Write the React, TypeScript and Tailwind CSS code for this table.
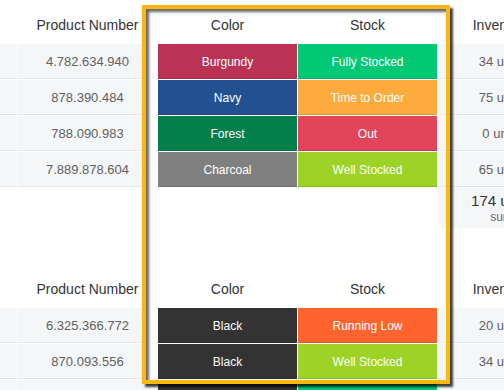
import React from "react";

type Row = {
  product: string;
  color: { label: string; bg: string };
  stock: { label: string; bg: string };
  units: string;
};

const firstGroup: Row[] = [
  { product: "4.782.634.940", color: { label: "Burgundy", bg: "bg-[#bb3354]" }, stock: { label: "Fully Stocked", bg: "bg-[#00c875]" }, units: "34 units" },
  { product: "878.390.484", color: { label: "Navy", bg: "bg-[#225091]" }, stock: { label: "Time to Order", bg: "bg-[#fdab3d]" }, units: "75 units" },
  { product: "788.090.983", color: { label: "Forest", bg: "bg-[#037f4c]" }, stock: { label: "Out", bg: "bg-[#e2445c]" }, units: "0 units" },
  { product: "7.889.878.604", color: { label: "Charcoal", bg: "bg-[#808080]" }, stock: { label: "Well Stocked", bg: "bg-[#9cd326]" }, units: "65 units" },
];

const secondGroup: Row[] = [
  { product: "6.325.366.772", color: { label: "Black", bg: "bg-[#333333]" }, stock: { label: "Running Low", bg: "bg-[#ff642e]" }, units: "20 units" },
  { product: "870.093.556", color: { label: "Black", bg: "bg-[#333333]" }, stock: { label: "Well Stocked", bg: "bg-[#9cd326]" }, units: "34 units" },
  { product: "3.041.557.210", color: { label: "Black", bg: "bg-[#333333]" }, stock: { label: "Fully Stocked", bg: "bg-[#00c875]" }, units: "47 units" },
];

const font = "font-['Liberation_Sans',Arial,sans-serif]";

function HeaderRow() {
  return (
    <div className="flex h-[44px] gap-px text-[14px] text-[#323338]">
      <div className="w-[17px] shrink-0" />
      <div className="flex w-[139px] shrink-0 items-center justify-center pt-[6px]">Product Number</div>
      <div className="flex w-[139px] shrink-0 items-center justify-center pt-[6px]">Color</div>
      <div className="flex w-[139px] shrink-0 items-center justify-center pt-[6px]">Stock</div>
      <div className="flex w-[127px] shrink-0 items-center justify-center pt-[6px]">Inventory</div>
    </div>
  );
}

function DataRow({ row }: { row: Row }) {
  const plain = "shrink-0 bg-[#f5f6f8] shadow-[inset_0_-1px_0_#e6e6ef]";
  const label = "flex w-[139px] shrink-0 items-center justify-center text-[12px] text-white shadow-[inset_0_-1px_0_rgba(0,0,0,0.12)]";
  return (
    <div className="flex h-[35px] gap-px">
      <div className={`w-[17px] ${plain}`} />
      <div className={`flex w-[139px] items-center justify-center text-[13px] text-[#616161] ${plain}`}>{row.product}</div>
      <div className={`${label} ${row.color.bg}`}>{row.color.label}</div>
      <div className={`${label} ${row.stock.bg}`}>{row.stock.label}</div>
      <div className={`flex w-[127px] items-center justify-center text-[13px] text-[#616161] ${plain}`}>{row.units}</div>
    </div>
  );
}

function SumRow({ total }: { total: string }) {
  return (
    <div className="flex h-[40px] gap-px">
      <div className="w-[17px] shrink-0" />
      <div className="w-[139px] shrink-0" />
      <div className="w-[139px] shrink-0" />
      <div className="w-[139px] shrink-0" />
      <div className="flex w-[127px] shrink-0 flex-col items-center justify-center rounded-b-[6px] bg-[#f5f6f8] leading-none">
        <span className="text-[15px] text-[#323338]">{total}</span>
        <span className="mt-[3px] text-[12px] text-[#676879]">sum</span>
      </div>
    </div>
  );
}

function Group({ rows, total }: { rows: Row[]; total?: string }) {
  return (
    <div className="flex flex-col">
      <HeaderRow />
      <div className="flex flex-col gap-px">
        {rows.map((r, i) => (
          <DataRow key={i} row={r} />
        ))}
        {total && <SumRow total={total} />}
      </div>
    </div>
  );
}

export default function App() {
  return (
    <div className={`relative h-[390px] w-[504px] overflow-hidden bg-white ${font}`}>
      <div className="flex w-max flex-col gap-[36px]">
        <Group rows={firstGroup} total="174 units" />
        <Group rows={secondGroup} />
      </div>

      {/* dragged column group frame */}
      <div className="pointer-events-none absolute left-[142px] top-[5px] h-[379px] w-[308px] border-4 border-[#fdb80b] bg-[linear-gradient(to_right,#ffffff_12px,transparent_12px)] shadow-[3px_3px_2px_rgba(0,0,0,0.75),inset_3px_3px_3px_rgba(0,0,0,0.6)]" />
    </div>
  );
}
